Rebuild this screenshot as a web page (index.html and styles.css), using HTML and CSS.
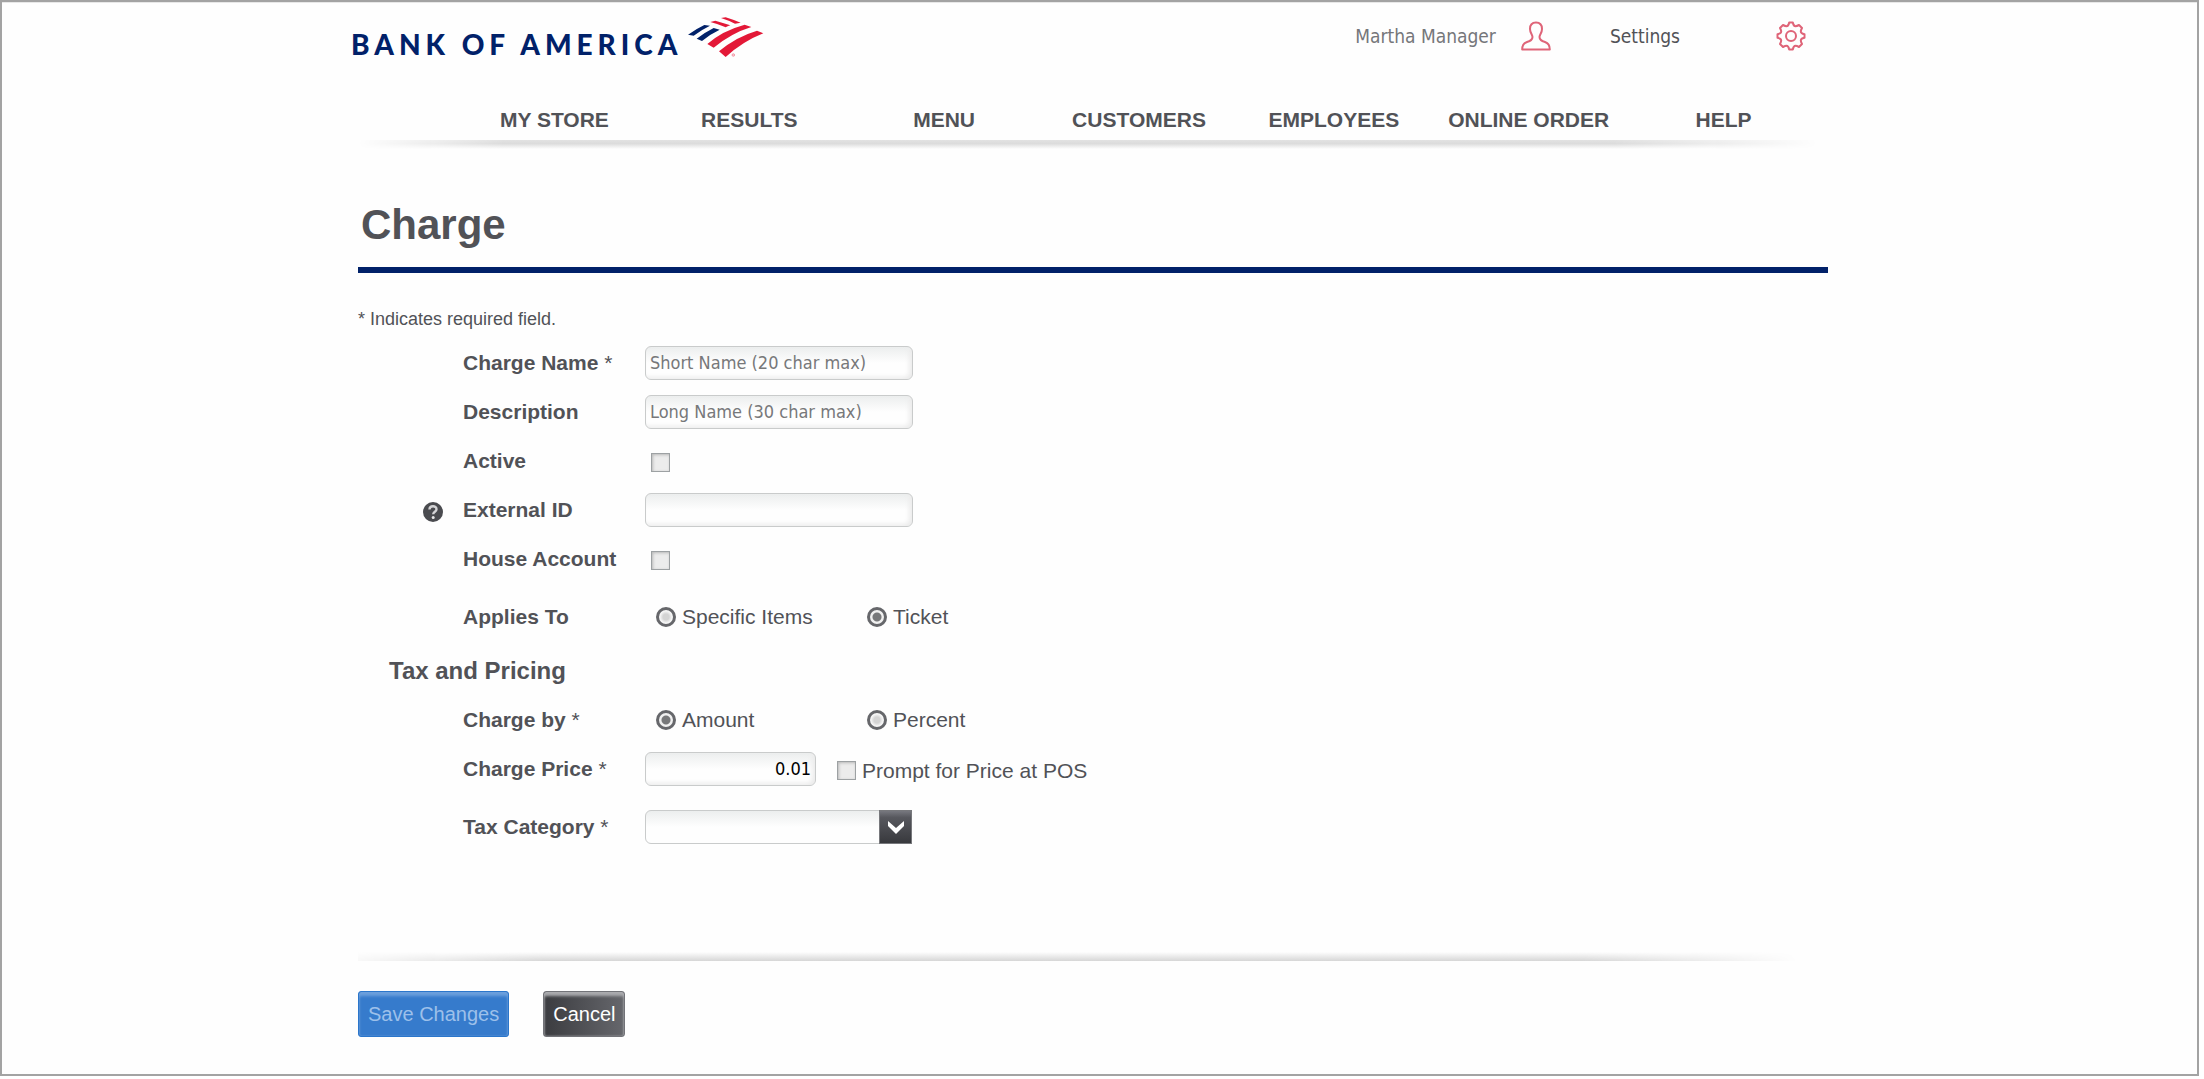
FILE: index.html
```html
<!DOCTYPE html>
<html lang="en">
<head>
<meta charset="utf-8">
<title>Charge</title>
<link rel="stylesheet" href="styles.css">
</head>
<body>
<div class="frame">
  <div class="container">
    <header class="top">
      <a class="logo" href="#">
        <span class="logo-text">BANK OF AMERICA</span>
        <svg class="logo-mark" viewBox="0 0 234 132" aria-hidden="true">
          <g fill="#012169">
            <path d="M3 56Q27 39 52 27L69 29Q44 41 20 59Z"/>
            <path d="M29 68Q54 49 80 36L98 41Q70 54 45 75Z"/>
          </g>
          <g fill="#e31837">
            <path d="M102 6L116 4Q138 11 161 20L144 23Q124 13 102 6Z"/>
            <path d="M70 18L85 14Q106 20 130 28Q124 30 116 34Q94 24 70 18Z"/>
            <path d="M61 84Q106 44 173 26L193 33Q134 51 80 95Z"/>
            <path d="M96 106Q146 63 210 44L229 52Q168 76 116 123Z"/>
          </g>
          <circle cx="139" cy="117" r="4" fill="#f9c5cd" stroke="#ee8797" stroke-width="2"/>
        </svg>
      </a>
      <div class="account">
        <a class="user" href="#">Martha Manager
          <svg class="user-icon" viewBox="0 0 30 30" aria-hidden="true"><path d="M15 1.500C11 1.500 9 3.800 9 8C9 12 11.500 13.500 11.500 16C11.500 19 9.500 19.800 6 21C2.500 22.200 1.200 24 1.200 28.500H28.800C28.800 24 27.500 22.200 24 21C20.500 19.800 18.500 19 18.500 16C18.500 13.500 21 12 21 8C21 3.800 19 1.500 15 1.500Z"/></svg>
        </a>
        <a class="settings" href="#">Settings
          <svg class="gear-icon" viewBox="-15 -15 30 30" aria-hidden="true"><path d="M-1.800 -13.500H1.800Q2.500 -9.800 4.500 -9.800Q5.800 -9.800 8 -11L11 -8Q9.800 -5.800 9.800 -4.500Q9.800 -2.500 13.500 -1.800V1.800Q9.800 2.500 9.800 4.500Q9.800 5.800 11 8L8 11Q5.800 9.800 4.500 9.800Q2.500 9.800 1.800 13.500H-1.800Q-2.500 9.800 -4.500 9.800Q-5.800 9.800 -8 11L-11 8Q-9.800 5.800 -9.800 4.500Q-9.800 2.500 -13.500 1.800V-1.800Q-9.800 -2.500 -9.800 -4.500Q-9.800 -5.800 -11 -8L-8 -11Q-5.800 -9.800 -4.500 -9.800Q-2.500 -9.800 -1.800 -13.500Z"/><circle r="5"/></svg>
        </a>
      </div>
    </header>

    <nav class="nav">
      <a href="#">MY STORE</a>
      <a href="#">RESULTS</a>
      <a href="#">MENU</a>
      <a href="#">CUSTOMERS</a>
      <a href="#">EMPLOYEES</a>
      <a href="#">ONLINE ORDER</a>
      <a href="#">HELP</a>
    </nav>
    <div class="rule rule-nav"></div>

    <main class="main">
      <h1>Charge</h1>
      <form>
        <p class="note">* Indicates required field.</p>

        <div class="row">
          <label for="name">Charge Name <span class="req">*</span></label>
          <input class="text" id="name" type="text" placeholder="Short Name (20 char max)">
        </div>
        <div class="row">
          <label for="desc">Description</label>
          <input class="text" id="desc" type="text" placeholder="Long Name (30 char max)">
        </div>
        <div class="row">
          <label for="active">Active</label>
          <span class="tick-cell"><input class="check" id="active" type="checkbox"></span>
        </div>
        <div class="row">
          <button class="help" type="button" aria-label="Help">
            <svg viewBox="0 0 20 20" aria-hidden="true"><circle cx="10" cy="10" r="10" fill="#4a4b4f"/><path d="M6.500 7.500C6.500 3.300 13.500 3.300 13.500 7.200C13.500 9.700 10.200 9.700 10.200 12.200" fill="none" stroke="#d4d4d6" stroke-width="2.400"/><circle cx="10.200" cy="15.500" r="1.500" fill="#e8e8e8"/></svg>
          </button>
          <label for="ext">External ID</label>
          <input class="text" id="ext" type="text">
        </div>
        <div class="row">
          <label for="house">House Account</label>
          <span class="tick-cell"><input class="check" id="house" type="checkbox"></span>
        </div>
        <div class="row row-tall" role="radiogroup" aria-labelledby="applies">
          <span class="label" id="applies">Applies To</span>
          <div class="options">
            <label class="option"><input class="radio" type="radio" name="applies">Specific Items</label>
            <label class="option"><input class="radio" type="radio" name="applies" checked>Ticket</label>
          </div>
        </div>

        <h2>Tax and Pricing</h2>

        <div class="row" role="radiogroup" aria-labelledby="by">
          <span class="label" id="by">Charge by <span class="req">*</span></span>
          <div class="options">
            <label class="option"><input class="radio" type="radio" name="by" checked>Amount</label>
            <label class="option"><input class="radio" type="radio" name="by">Percent</label>
          </div>
        </div>
        <div class="row">
          <label for="price">Charge Price <span class="req">*</span></label>
          <div class="price">
            <input class="text text-price" id="price" type="text" value="0.01">
            <label class="prompt"><input class="check" type="checkbox">Prompt for Price at POS</label>
          </div>
        </div>
        <div class="row row-tall">
          <label for="tax">Tax Category <span class="req">*</span></label>
          <div class="select">
            <select id="tax"><option></option></select>
            <span class="arrow"><svg viewBox="0 0 20 16" aria-hidden="true"><path d="M2 2L10 9L18 2V7L10 15L2 7Z" fill="#fff"/></svg></span>
          </div>
        </div>

        <div class="rule rule-foot"></div>
        <div class="actions">
          <button class="btn btn-save" type="submit" disabled>Save Changes</button>
          <button class="btn btn-cancel" type="button">Cancel</button>
        </div>
      </form>
    </main>
  </div>
</div>
</body>
</html>
```
FILE: styles.css
```css
* { box-sizing: border-box; }

body {
  margin: 0 5px 5px 0;
  background: #fff;
  color: #515257;
  font: 21px/24px Arial, "Liberation Sans", sans-serif;
}

a { color: inherit; text-decoration: none; }

.frame {
  border: 2px solid #a3a3a3;
  box-shadow: 2px 2px 0 #e2e2e2, inset 0 1px 0 #e8e8e8;
  background: #fefefe;
}

.container {
  max-width: 1497px;
  margin: 0 auto;
}

/* Header */
.top {
  display: flex;
  justify-content: space-between;
  align-items: flex-start;
  height: 100px;
  padding: 14px 42px 0 0;
}

.logo { display: flex; gap: 5px; }

.logo-text {
  padding-top: 12px;
  color: #012169;
  font: 900 28px/32px Lato, sans-serif;
  letter-spacing: 5px;
}

.logo-mark { width: 78px; height: 44px; }

.account {
  display: flex;
  gap: 59px;
  padding-top: 4px;
  font: 19px/32px Tahoma, "DejaVu Sans Condensed", "Noto Sans", sans-serif;
}

.user, .settings { display: flex; align-items: center; }
.user { gap: 25px; color: #75767a; }
.settings { gap: 96px; }

.user-icon, .gear-icon {
  width: 30px;
  height: 30px;
  fill: none;
  stroke: #df6478;
  stroke-width: 2;
  stroke-linejoin: round;
}

.nav {
  display: grid;
  grid-template-columns: repeat(7, 1fr);
  height: 38px;
  padding: 6px 27px 0 106px;
  font-weight: bold;
  text-align: center;
}

.rule { height: 9px; }

.rule-nav {
  margin: 0 30px 0 7px;
  background: linear-gradient(#e2e2e2, #dcdcdc 40%, #fefefe);
  mask-image: linear-gradient(90deg, transparent, #000 10%, #000 86%, transparent);
}

.rule-foot {
  margin: 91px 30px 30px 0;
  background: linear-gradient(#fefefe, #d6d6d6);
  mask-image: linear-gradient(90deg, rgba(0, 0, 0, .15), #000 13%, #000 85%, transparent);
}

/* Form */
.main { padding: 52px 20px 37px 7px; }

h1 {
  margin: 0 0 35px;
  padding: 0 0 18px 3px;
  border-bottom: 6px solid #012169;
  font-size: 42px;
  line-height: 48px;
}

h2 {
  margin: 0 0 5px;
  padding-left: 31px;
  font-size: 24px;
  line-height: 39px;
}

.note {
  margin: 0 0 8px;
  font-size: 18px;
  line-height: 22px;
}

.row {
  display: grid;
  grid-template-columns: 105px 182px 1fr;
  align-items: center;
  min-height: 49px;
}

.row-tall { min-height: 68px; }

.row > label, .label { grid-column: 2; font-weight: bold; }
.req { font-weight: normal; }

.help {
  justify-self: end;
  width: 20px;
  height: 20px;
  margin: 4px 20px 0 0;
  padding: 0;
  border: 0;
  background: none;
}

.help svg { display: block; }

.text, .select select {
  height: 34px;
  border: 1px solid #c9cbcb;
  border-radius: 6px;
  background: linear-gradient(#eceeee, #fefefe 50%);
  font: 18px/24px Tahoma, "DejaVu Sans Condensed", "Noto Sans", sans-serif;
}

.text {
  width: 268px;
  padding: 0 4px;
  box-shadow: inset -3px -2px 4px #ececec;
}

.text::placeholder { color: #77787a; }
.text-price { width: 171px; text-align: right; color: #000; }

.check {
  appearance: none;
  width: 19px;
  height: 19px;
  margin: 0;
  border: 1px solid #9da1a3;
  background: #ececec;
  box-shadow: inset 1px 1px 3px #b8b8b8;
}

.tick-cell { display: flex; padding: 4px 0 0 6px; }

.options {
  display: grid;
  grid-template-columns: 211px 211px;
  padding-left: 11px;
}

.option, .prompt { display: flex; align-items: center; gap: 6px; }
.prompt { padding-top: 4px; }

.radio {
  appearance: none;
  width: 20px;
  height: 20px;
  margin: 0;
  border: 3px solid #66676b;
  border-radius: 50%;
  background: radial-gradient(circle, #d4d4d4 0 3px, #f6f6f6 6px);
}

.radio:checked { background: radial-gradient(circle, #77787a 0 4px, #f0f0f0 5px); }

.price { display: flex; align-items: center; gap: 21px; }

.select { display: grid; width: 267px; }

.select select {
  grid-area: 1 / 1;
  appearance: none;
  width: 100%;
  padding: 0 38px 0 4px;
}

.arrow {
  grid-area: 1 / 1;
  justify-self: end;
  display: grid;
  place-items: center;
  width: 33px;
  height: 34px;
  border: 1px solid #77787c;
  background: linear-gradient(#77787f, #57585e 20%, #38393d);
  pointer-events: none;
}

.arrow svg { width: 20px; height: 16px; }

/* Buttons */
.actions { display: flex; gap: 34px; }

.btn {
  height: 46px;
  padding: 0 9px;
  border: 1px solid;
  border-radius: 3px;
  font: 20px/24px Arial, "Liberation Sans", sans-serif;
}

.btn-save {
  border-color: #2b76cb;
  background: #367bcc;
  box-shadow: inset 0 4px 3px #6b9fdc, inset 0 0 2px #6b9fdc;
  color: #9dc0ea;
}

.btn-cancel {
  border-color: #727378;
  background: linear-gradient(90deg, #3b3c40, #66676c);
  box-shadow: inset 0 4px 3px #aaabae, inset 0 0 2px #aaabae;
  color: #fff;
}
```
